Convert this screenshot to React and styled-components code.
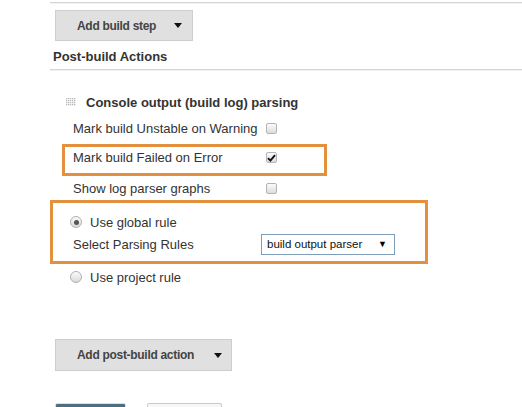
import React from 'react';
import styled, { createGlobalStyle } from 'styled-components';

const Global = createGlobalStyle`
  html, body {
    margin: 0;
    background: #fff;
    overflow: hidden;
  }
  body {
    font-family: "Liberation Sans", Arial, sans-serif;
    font-size: 13px;
    color: #333;
  }
`

const Page = styled.div`
  width: 522px;
  height: 407px;
  padding-left: 50px;
  box-sizing: border-box;
  overflow: hidden;
`

const Rule = styled.div`
  height: 1px;
  background: #d6d6d6;
  box-shadow: 0 1px 0 #f2f2f2;
  margin-top: ${p => p.top || 0}px;
`

const DropButton = styled.div`
  display: flex;
  align-items: center;
  box-sizing: border-box;
  width: ${p => p.width}px;
  height: ${p => p.height || 31}px;
  margin-left: 5px;
  margin-top: ${p => p.top}px;
  padding-left: 21px;
  background: #e0e0e0;
  border: 1px solid #cdcdcd;
  font-size: 12px;
  letter-spacing: -0.3px;
  font-weight: bold;
  color: #444;
`

const Arrow = styled.span`
  width: 0;
  height: 0;
  margin-left: auto;
  margin-right: ${p => p.right}px;
  border-left: 4px solid transparent;
  border-right: 4px solid transparent;
  border-top: 5px solid #111;
`

const SectionTitle = styled.div`
  height: 20px;
  line-height: 20px;
  margin-top: 6px;
  padding-left: 3px;
  font-weight: bold;
`

const Heading = styled.div`
  display: flex;
  align-items: center;
  height: 20px;
  margin-top: 22px;
  padding-left: 16px;
  font-weight: bold;
  gap: 9px;
`

const Row = styled.div`
  display: grid;
  grid-template-columns: ${p => p.col || 193}px auto;
  align-items: center;
  height: ${p => p.h || 20}px;
  margin-top: ${p => p.top || 0}px;
  padding-left: ${p => p.pad ?? 23}px;
`

const RadioRow = styled.div`
  display: flex;
  align-items: center;
  gap: 8px;
  height: 20px;
  margin-top: ${p => p.top || 0}px;
  padding-left: ${p => p.pad ?? 20}px;
`

const Highlight = styled.div`
  box-sizing: border-box;
  width: ${p => p.width}px;
  margin-left: ${p => p.left}px;
  margin-top: ${p => p.top}px;
  padding: ${p => p.pad};
  border: 3px solid #e3913e;
`

const Box = styled.span`
  display: inline-flex;
  align-items: center;
  justify-content: center;
  box-sizing: border-box;
  width: 11px;
  height: 11px;
  border: 1px solid #b4b4b4;
  border-radius: 2px;
  background: linear-gradient(#fbfbfb, #dcdcdc);
`

const Radio = styled.span`
  display: inline-flex;
  align-items: center;
  justify-content: center;
  box-sizing: border-box;
  width: 12px;
  height: 12px;
  border: 1px solid #b0b0b0;
  border-radius: 50%;
  background: linear-gradient(#fafafa, #dadada);
  &::after {
    content: '';
    width: 5px;
    height: 5px;
    border-radius: 50%;
    background: ${p => (p.on ? '#555' : 'transparent')};
  }
`

const Select = styled.div`
  display: flex;
  align-items: center;
  box-sizing: border-box;
  width: 134px;
  height: 21px;
  padding: 0 7px 0 5px;
  border: 1px solid #7f9db9;
  background: #fff;
  color: #111;
  font-size: 11.5px;
`

const SelectArrow = styled.span`
  margin-left: auto;
  font-size: 9px;
  color: #000;
`

const Footer = styled.div`
  display: flex;
  gap: 21px;
  margin-top: 32px;
  padding-left: 5px;
`

const FooterButton = styled.div`
  width: ${p => p.width}px;
  height: 30px;
  box-sizing: border-box;
  border: 1px solid ${p => (p.primary ? '#cfe3ec' : '#c9c9c9')};
  border-radius: 2px;
  background: ${p => (p.primary ? '#4b6f80' : '#f7f7f7')};
`

function Check({ checked }) {
  return (
    <Box>
      {checked && (
        <svg width="9" height="8" viewBox="0 0 9 8">
          <path d="M1 4.2 L3.4 6.6 L8 1.2" stroke="#111" strokeWidth="1.9" fill="none" />
        </svg>
      )}
    </Box>
  );
}

function Handle() {
  const dots = [];
  for (let r = 0; r < 4; r++)
    for (let c = 0; c < 5; c++)
      dots.push(<rect key={r + '-' + c} x={c * 2} y={r * 2 + 1} width="1.3" height="1.3" fill="#b8b8b8" />);
  return (
    <svg width="11" height="10" viewBox="0 0 11 10">
      {dots}
    </svg>
  );
}

export default function App() {
  return (
    <Page>
      <Global />
      <Rule top={2} />
      <DropButton width={138} top={7}>
        Add build step
        <Arrow right={10} />
      </DropButton>
      <SectionTitle>Post-build Actions</SectionTitle>
      <Rule top={2} />

      <Heading>
        <Handle />
        Console output (build log) parsing
      </Heading>
      <Row top={6}>
        <span>Mark build Unstable on Warning</span>
        <Check />
      </Row>
      <Highlight width={265} left={12} top={6} pad="2px 0 7px 8px">
        <Row pad={0} col={193} h={17}>
          <span>Mark build Failed on Error</span>
          <Check checked />
        </Row>
      </Highlight>
      <Row top={2}>
        <span>Show log parser graphs</span>
        <Check />
      </Row>
      <Highlight width={378} left={0} top={2} pad="9px 0 6px 20px">
        <RadioRow pad={0} style={{ marginLeft: -3 }}>
          <Radio on />
          <span>Use global rule</span>
        </RadioRow>
        <Row pad={0} col={188} h={22} top={1}>
          <span>Select Parsing Rules</span>
          <Select>
            build output parser
            <SelectArrow>▼</SelectArrow>
          </Select>
        </Row>
      </Highlight>
      <RadioRow top={3}>
        <Radio />
        <span>Use project rule</span>
      </RadioRow>

      <DropButton width={177} height={32} top={52}>
        Add post-build action
        <Arrow right={9} />
      </DropButton>

      <Footer>
        <FooterButton primary width={71} />
        <FooterButton width={75} />
      </Footer>
    </Page>
  );
}
